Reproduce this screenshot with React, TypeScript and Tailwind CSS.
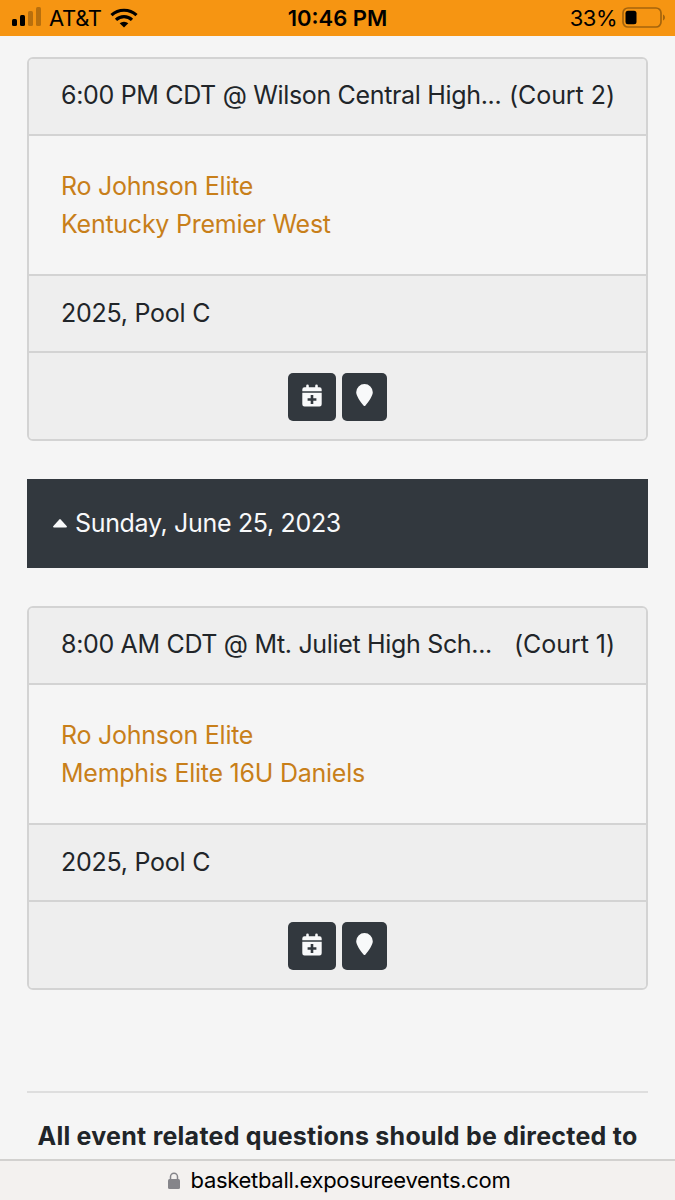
type Game = {
  time: string;
  court: string;
  teams: string[];
  pool: string;
};

const saturdayGame: Game = {
  time: "6:00 PM CDT @ Wilson Central High...",
  court: "(Court 2)",
  teams: ["Ro Johnson Elite", "Kentucky Premier West"],
  pool: "2025, Pool C",
};

const sundayGame: Game = {
  time: "8:00 AM CDT @ Mt. Juliet High Sch...",
  court: "(Court 1)",
  teams: ["Ro Johnson Elite", "Memphis Elite 16U Daniels"],
  pool: "2025, Pool C",
};

function CalendarPlusIcon() {
  return (
    <svg className="mb-[3px] mr-px" width="20" height="23" viewBox="0 0 20 23" aria-hidden="true">
      <path
        fill="#f8f9fa"
        fillRule="evenodd"
        d="M4.200 1.700a1.300 1.300 0 0 1 2.600 0V3.300h6.400V1.700a1.300 1.300 0 0 1 2.600 0V3.300H17.500A2.200 2.200 0 0 1 19.700 5.500V7.200H.3V5.500A2.200 2.200 0 0 1 2.500 3.300H4.200ZM.3 8.700H19.700V20.200A2.200 2.200 0 0 1 17.500 22.400H2.500A2.200 2.200 0 0 1 .3 20.200ZM8.700 11.100V14.200H5.600V16.800H8.700V19.900H11.300V16.800H14.400V14.200H11.300V11.100Z"
      />
    </svg>
  );
}

function MarkerIcon() {
  return (
    <svg className="mb-[3px]" width="17" height="22" viewBox="0 0 17 22" aria-hidden="true">
      <path
        fill="#f8f9fa"
        d="M8.500 0A8.300 8.300 0 0 0 .2 8.300C.2 12 4.500 17.900 7.500 21.500a1.300 1.300 0 0 0 2 0C12.500 17.900 16.800 12 16.800 8.300A8.300 8.300 0 0 0 8.500 0Z"
      />
    </svg>
  );
}

function StatusBar() {
  return (
    <header className="grid h-9 grid-cols-3 items-center bg-[#f69512] text-[22px] leading-9 text-black">
      <div className="flex items-center pl-[11px]">
        <svg className="-mt-0.5" width="31" height="20" viewBox="0 0 31 20" aria-hidden="true">
          <rect x="1" y="12" width="5" height="7" rx="1.500" />
          <rect x="9" y="8" width="5" height="11" rx="1.500" />
          <rect x="17" y="4" width="5" height="15" rx="1.500" opacity="0.250" />
          <rect x="25" y="0" width="5" height="19" rx="1.500" opacity="0.250" />
        </svg>
        <span className="ml-[7px] tracking-[-0.3px]">AT&amp;T</span>
        <svg className="ml-[8px]" width="28" height="20" viewBox="0 0 28 20" aria-hidden="true">
          <g fill="none" stroke="#000" strokeWidth="3.200">
            <path d="M1.500 7.200a18.200 18.200 0 0 1 25 0" />
            <path d="M6 11.800a11.700 11.700 0 0 1 16 0" />
          </g>
          <path d="M9.700 15.300a6.500 6.500 0 0 1 8.600 0L14 19.600Z" />
        </svg>
      </div>
      <span className="text-center font-semibold">10:46 PM</span>
      <div className="flex items-center justify-end pr-[9px]">
        <span className="tracking-[-0.5px]">33%</span>
        <svg className="ml-[5px]" width="44" height="22" viewBox="0 0 44 22" aria-hidden="true">
          <rect x="1" y="1" width="38" height="19" rx="5" fill="none" stroke="#a5640c" strokeWidth="1.700" />
          <rect x="3.500" y="3.800" width="11" height="13.500" rx="2.500" />
          <path d="M41 7.500c2.600 1 2.600 5 0 6Z" fill="#a5640c" />
        </svg>
      </div>
    </header>
  );
}

function GameCard({ game }: { game: Game }) {
  return (
    <article className="h-96 overflow-hidden rounded-md border-2 border-[#d3d3d3] bg-[#f5f5f5] text-[#212529]">
      <div className="flex h-[77px] items-center justify-between border-b-2 border-[#d3d3d3] bg-[#eee] pb-px pl-8 pr-[31px]">
        <span className="whitespace-nowrap tracking-[-0.33px]">{game.time}</span>
        <span className="whitespace-nowrap tracking-[-0.05px]">{game.court}</span>
      </div>
      <div className="h-[140px] border-b-2 border-[#d3d3d3] px-8 pt-[31px] leading-[38px] tracking-[-0.25px] text-[#c87f1a]">
        {game.teams.map((team) => (
          <a key={team} className="block">
            {team}
          </a>
        ))}
      </div>
      <div className="flex h-[77px] items-center border-b-2 border-[#d3d3d3] bg-[#eee] px-8 tracking-[-0.25px]">
        {game.pool}
      </div>
      <div className="flex h-[86px] items-center justify-center gap-1.5 bg-[#eee] pt-px">
        <button type="button" aria-label="Add to calendar" className="flex h-12 w-12 items-center justify-center rounded-[5px] bg-[#32383e]">
          <CalendarPlusIcon />
        </button>
        <button type="button" aria-label="Directions" className="flex h-12 w-[45px] items-center justify-center rounded-[5px] bg-[#32383e]">
          <MarkerIcon />
        </button>
      </div>
    </article>
  );
}

export default function App() {
  return (
    <div className="flex h-[1200px] w-[675px] flex-col overflow-hidden bg-[#f5f5f5] font-[Inter,sans-serif] text-[25px]">
      <StatusBar />
      <main className="min-h-0 flex-1 overflow-hidden px-[27px] pt-[21px]">
        <GameCard game={saturdayGame} />
        <div className="mb-[38px] mt-[38px] flex h-[89px] items-center bg-[#32383e] pl-[26px] text-[#f8f9fa]">
          <svg width="14" height="9" viewBox="0 0 14 9" aria-hidden="true">
            <path d="M6.300.4a1 1 0 0 1 1.400 0L13.800 7.200Q14.300 8.500 13 8.500H1Q-.3 8.500.2 7.200Z" fill="#f8f9fa" />
          </svg>
          <span className="ml-2 tracking-[-0.33px]">Sunday, June 25, 2023</span>
        </div>
        <GameCard game={sundayGame} />
        <hr className="mt-[101px] border-t-2 border-[#dedede]" />
        <p className="-mx-2 mt-6 whitespace-nowrap text-center font-bold leading-[38px] tracking-[0.25px] text-[#212529]">
          All event related questions should be directed to
        </p>
      </main>
      <footer className="flex h-[41px] items-center justify-center border-t-2 border-[#d2d1cf] bg-[#f3f1ef] pb-px pl-[3px] text-[22px] text-black">
        <svg width="12" height="17" viewBox="0 0 12 17" aria-hidden="true">
          <path d="M2.500 8V4.700a3.500 3.500 0 0 1 7 0V8" fill="none" stroke="#85858a" strokeWidth="1.500" />
          <rect y="7" width="12" height="10" rx="1.500" fill="#85858a" />
        </svg>
        <span className="ml-[11px] tracking-[-0.31px]">basketball.exposureevents.com</span>
      </footer>
    </div>
  );
}
